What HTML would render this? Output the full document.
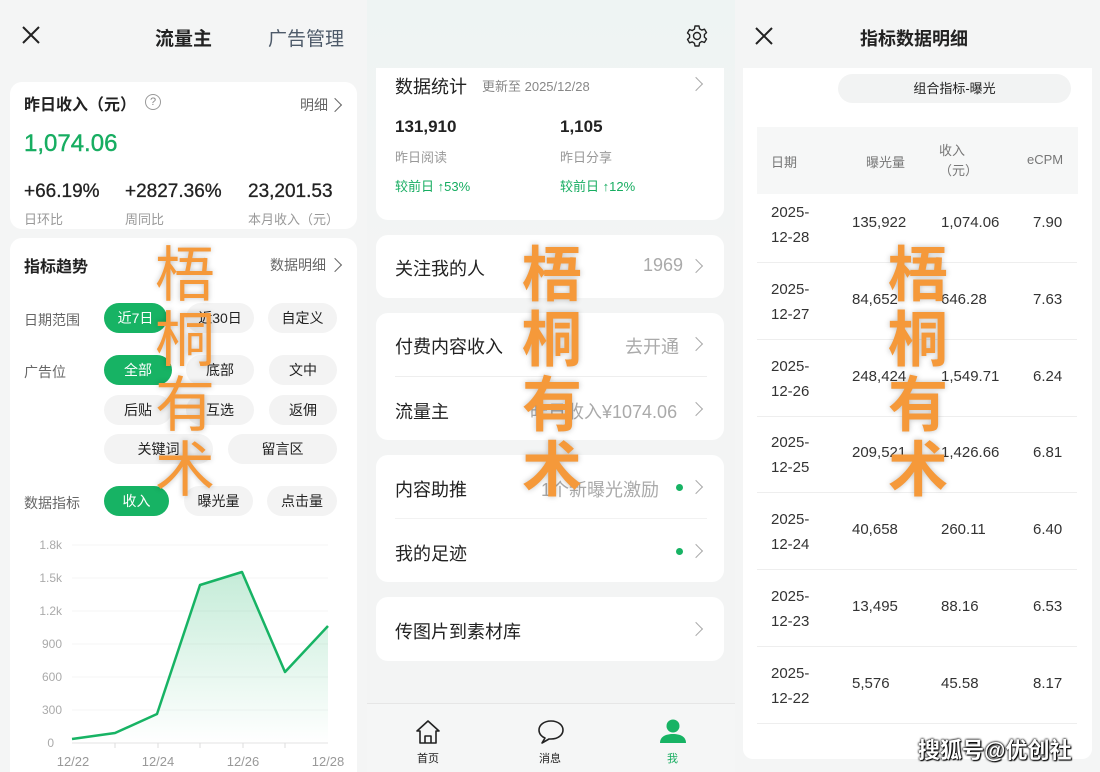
<!DOCTYPE html>
<html><head><meta charset="utf-8"><style>
*{margin:0;padding:0;box-sizing:border-box}
html,body{width:1100px;height:772px;overflow:hidden}
body{position:relative;font-family:"Liberation Sans","Noto Sans CJK SC",sans-serif;color:#222;background:#f4f5f5}
.a{position:absolute;white-space:nowrap}
.card{position:absolute;background:#fff;border-radius:12px}
.g{color:#999}
.pill{position:absolute;height:30px;border-radius:15px;background:#f3f3f3;font-size:14px;text-align:center;line-height:30px;color:#222}
.pill.on{background:#17b364;color:#fff}
.chev{position:absolute;width:10px;height:10px;border-top:1.4px solid #aaa;border-right:1.4px solid #aaa;transform:rotate(45deg)}
.wm{position:absolute;font-size:60px;line-height:65px;color:#f5993a;width:64px;text-align:center;text-shadow:0 0 6px rgba(0,0,0,.25);font-family:"Noto Sans CJK SC",sans-serif}
.td{position:absolute;font-size:15px;color:#333}
</style></head><body>
<!-- LEFT -->
<div class="a" style="left:0;top:0;width:367px;height:772px;background:#f4f5f5"></div>
<svg class="a" style="left:22px;top:26px" width="18" height="18"><path d="M1 1L17 17M17 1L1 17" stroke="#222" stroke-width="2"/></svg>
<div class="a" style="left:155px;top:24px;font-size:19px;font-weight:bold">流量主</div>
<div class="a" style="left:268px;top:24px;font-size:19px;color:#4d5a69">广告管理</div>
<div class="card" style="left:10px;top:82px;width:347px;height:147px"></div>
<div class="a" style="left:24px;top:91px;font-size:16px;font-weight:bold">昨日收入（元）</div>
<div class="a" style="left:145px;top:94px;width:16px;height:16px;border:1px solid #999;border-radius:50%;font-size:11px;color:#888;text-align:center;line-height:14px">?</div>
<div class="a g" style="left:300px;top:95px;font-size:14px;color:#666">明细</div>
<div class="chev" style="left:330px;top:100px;border-color:#666"></div>
<div class="a" style="left:24px;top:130px;font-size:24px;color:#17ad61;-webkit-text-stroke:0.4px #17ad61">1,074.06</div>
<div class="a" style="left:24px;top:181px;font-size:19px;-webkit-text-stroke:0.3px #222">+66.19%</div>
<div class="a" style="left:125px;top:181px;font-size:19px;-webkit-text-stroke:0.3px #222">+2827.36%</div>
<div class="a" style="left:248px;top:181px;font-size:19px;-webkit-text-stroke:0.3px #222">23,201.53</div>
<div class="a g" style="left:24px;top:209px;font-size:13px">日环比</div>
<div class="a g" style="left:125px;top:209px;font-size:13px">周同比</div>
<div class="a g" style="left:248px;top:209px;font-size:13px">本月收入（元）</div>
<div class="card" style="left:10px;top:238px;width:347px;height:534px;border-radius:12px 12px 0 0"></div>
<div class="a" style="left:24px;top:253px;font-size:16px;font-weight:bold">指标趋势</div>
<div class="a" style="left:270px;top:255px;font-size:14px;color:#666">数据明细</div>
<div class="chev" style="left:330px;top:260px;border-color:#666"></div>
<div class="a" style="left:24px;top:310px;font-size:14px;color:#666">日期范围</div>
<div class="pill on" style="left:104px;top:303px;width:63px">近7日</div>
<div class="pill" style="left:186px;top:303px;width:68px">近30日</div>
<div class="pill" style="left:268px;top:303px;width:69px">自定义</div>
<div class="a" style="left:24px;top:362px;font-size:14px;color:#666">广告位</div>
<div class="pill on" style="left:104px;top:355px;width:68px">全部</div>
<div class="pill" style="left:186px;top:355px;width:68px">底部</div>
<div class="pill" style="left:269px;top:355px;width:68px">文中</div>
<div class="pill" style="left:104px;top:395px;width:68px">后贴</div>
<div class="pill" style="left:186px;top:395px;width:68px">互选</div>
<div class="pill" style="left:269px;top:395px;width:68px">返佣</div>
<div class="pill" style="left:104px;top:434px;width:109px">关键词</div>
<div class="pill" style="left:228px;top:434px;width:109px">留言区</div>
<div class="a" style="left:24px;top:493px;font-size:14px;color:#666">数据指标</div>
<div class="pill on" style="left:104px;top:486px;width:65px">收入</div>
<div class="pill" style="left:184px;top:486px;width:69px">曝光量</div>
<div class="pill" style="left:267px;top:486px;width:70px">点击量</div>
<svg class="a" style="left:0;top:530px" width="367" height="242">
<defs><linearGradient id="gr" x1="0" y1="0" x2="0" y2="1"><stop offset="0" stop-color="#17b364" stop-opacity=".25"/><stop offset="1" stop-color="#17b364" stop-opacity="0"/></linearGradient></defs>
<g stroke="#f5f5f5"><path d="M72 15H328M72 48H328M72 81H328M72 114H328M72 147H328M72 180H328"/></g>
<path d="M72 213H328" stroke="#e3e3e3"/>
<g stroke="#ddd"><path d="M115 213v5M158 213v5M200 213v5M243 213v5M285 213v5"/></g>
<g font-size="12" fill="#aaa" text-anchor="end" font-family="Liberation Sans">
<text x="62" y="19">1.8k</text><text x="62" y="52">1.5k</text><text x="62" y="85">1.2k</text><text x="62" y="118">900</text><text x="62" y="151">600</text><text x="62" y="184">300</text><text x="54" y="217">0</text></g>
<g font-size="13" fill="#999" text-anchor="middle" font-family="Liberation Sans">
<text x="73" y="236">12/22</text><text x="158" y="236">12/24</text><text x="243" y="236">12/26</text><text x="328" y="236">12/28</text></g>
<path d="M72 209L115 203L157 184L200 55L242 42L285 142L328 96V213H72Z" fill="url(#gr)"/>
<path d="M72 209L115 203L157 184L200 55L242 42L285 142L328 96" fill="none" stroke="#17b364" stroke-width="2.5" stroke-linejoin="round"/>
</svg>
<div class="wm" style="left:153px;top:238px">梧<br>桐<br>有<br>术</div>

<!-- MIDDLE -->
<div class="a" style="left:367px;top:0;width:368px;height:772px;background:linear-gradient(#eef4f3,#f3f4f4 250px)"></div>
<svg class="a" style="left:685px;top:24px" width="24" height="24" viewBox="0 0 24 24"><path d="M10 2h4l.6 2.8 2.2 1.3 2.7-.9 2 3.4-2.1 1.9v2.6l2.1 1.9-2 3.4-2.7-.9-2.2 1.3L14 22h-4l-.6-2.8-2.2-1.3-2.7.9-2-3.4 2.1-1.9V10.9L2.5 9l2-3.4 2.7.9 2.2-1.3z" fill="none" stroke="#222" stroke-width="1.4" stroke-linejoin="round"/><circle cx="12" cy="12" r="3.5" fill="none" stroke="#222" stroke-width="1.4"/></svg>
<div class="card" style="left:376px;top:68px;width:348px;height:152px;border-radius:0 0 12px 12px"></div>
<div class="a" style="left:395px;top:73px;font-size:18px">数据统计</div>
<div class="a g" style="left:482px;top:76px;font-size:13px;color:#888">更新至 2025/12/28</div>
<div class="chev" style="left:691px;top:79px"></div>
<div class="a" style="left:395px;top:117px;font-size:17px;font-weight:bold">131,910</div>
<div class="a" style="left:560px;top:117px;font-size:17px;font-weight:bold">1,105</div>
<div class="a g" style="left:395px;top:147px;font-size:13px">昨日阅读</div>
<div class="a g" style="left:560px;top:147px;font-size:13px">昨日分享</div>
<div class="a" style="left:395px;top:176px;font-size:13px;color:#17ad61">较前日 ↑53%</div>
<div class="a" style="left:560px;top:176px;font-size:13px;color:#17ad61">较前日 ↑12%</div>
<div class="card" style="left:376px;top:235px;width:348px;height:63px"></div>
<div class="a" style="left:395px;top:255px;font-size:18px">关注我的人</div>
<div class="a g" style="left:643px;top:255px;font-size:18px;color:#aaa">1969</div>
<div class="chev" style="left:691px;top:261px"></div>
<div class="card" style="left:376px;top:313px;width:348px;height:127px"></div>
<div class="a" style="left:395px;top:333px;font-size:18px">付费内容收入</div>
<div class="a" style="left:625px;top:333px;font-size:18px;color:#aaa">去开通</div>
<div class="chev" style="left:691px;top:339px"></div>
<div class="a" style="left:395px;top:376px;width:312px;height:1px;background:#eee"></div>
<div class="a" style="left:395px;top:398px;font-size:18px">流量主</div>
<div class="a" style="left:530px;top:398px;font-size:18px;color:#aaa">昨日收入¥1074.06</div>
<div class="chev" style="left:691px;top:404px"></div>
<div class="card" style="left:376px;top:455px;width:348px;height:127px"></div>
<div class="a" style="left:395px;top:476px;font-size:18px">内容助推</div>
<div class="a" style="left:541px;top:476px;font-size:18px;color:#aaa">1个新曝光激励</div>
<div class="a" style="left:676px;top:484px;width:7px;height:7px;border-radius:50%;background:#17b364"></div>
<div class="chev" style="left:691px;top:482px"></div>
<div class="a" style="left:395px;top:518px;width:312px;height:1px;background:#f2f2f2"></div>
<div class="a" style="left:395px;top:540px;font-size:18px">我的足迹</div>
<div class="a" style="left:676px;top:548px;width:7px;height:7px;border-radius:50%;background:#17b364"></div>
<div class="chev" style="left:691px;top:546px"></div>
<div class="card" style="left:376px;top:597px;width:348px;height:64px"></div>
<div class="a" style="left:395px;top:618px;font-size:18px">传图片到素材库</div>
<div class="chev" style="left:691px;top:624px"></div>
<div class="a" style="left:367px;top:703px;width:368px;height:69px;background:#f5f6f6;border-top:1px solid #e6e6e6"></div>
<svg class="a" style="left:415px;top:719px" width="26" height="26" viewBox="0 0 26 26"><path d="M2 12L13 2L24 12H21V24H5V12Z M10 24V17H16V24" fill="none" stroke="#222" stroke-width="1.6" stroke-linejoin="round"/></svg>
<svg class="a" style="left:537px;top:719px" width="28" height="26" viewBox="0 0 28 26"><path d="M14 2C7 2 2 6 2 11C2 15 5 18 8 19L5 24L12 20C13 20 13.5 20 14 20C21 20 26 16 26 11C26 6 21 2 14 2Z" fill="none" stroke="#222" stroke-width="1.6" stroke-linejoin="round"/></svg>
<svg class="a" style="left:659px;top:718px" width="28" height="26" viewBox="0 0 28 26"><circle cx="14" cy="8" r="6.5" fill="#17b364"/><path d="M1 25C1 19 6 16 14 16C22 16 27 19 27 25Z" fill="#17b364"/></svg>
<div class="a" style="left:417px;top:750px;font-size:11px">首页</div>
<div class="a" style="left:539px;top:750px;font-size:11px">消息</div>
<div class="a" style="left:667px;top:750px;font-size:11px;color:#17ad61">我</div>
<div class="wm" style="left:520px;top:238px;font-weight:bold">梧<br>桐<br>有<br>术</div>

<!-- RIGHT -->
<div class="a" style="left:735px;top:0;width:365px;height:772px;background:#f4f5f5"></div>
<svg class="a" style="left:755px;top:27px" width="18" height="18"><path d="M1 1L17 17M17 1L1 17" stroke="#222" stroke-width="2"/></svg>
<div class="a" style="left:860px;top:25px;font-size:18px;font-weight:bold">指标数据明细</div>
<div class="card" style="left:743px;top:68px;width:349px;height:691px;border-radius:0 0 10px 10px"></div>
<div class="a" style="left:838px;top:74px;width:233px;height:29px;border-radius:15px;background:#f2f3f3;font-size:13px;text-align:center;line-height:29px">组合指标-曝光</div>
<div class="a" style="left:757px;top:127px;width:321px;height:67px;background:#f6f7f7"></div>
<div class="td" style="left:771px;top:152px;font-size:13px;color:#777">日期</div>
<div class="td" style="left:866px;top:152px;font-size:13px;color:#777">曝光量</div>
<div class="td" style="left:939px;top:141px;font-size:13px;color:#777;line-height:20px;white-space:nowrap">收入<br>（元）</div>
<div class="td" style="left:1027px;top:152px;font-size:13px;color:#777">eCPM</div>
<div id="rows"></div>
<div class="wm" style="left:886px;top:238px;font-weight:bold">梧<br>桐<br>有<br>术</div>
<div class="a" style="left:918px;top:733px;font-size:22px;color:#fff;font-weight:bold;text-shadow:0 0 2px #000,0 0 2px #000,1px 1px 1px #000">搜狐号@优创社</div>
<script>
var d=[["12-28","135,922","1,074.06","7.90"],["12-27","84,652","646.28","7.63"],["12-26","248,424","1,549.71","6.24"],["12-25","209,521","1,426.66","6.81"],["12-24","40,658","260.11","6.40"],["12-23","13,495","88.16","6.53"],["12-22","5,576","45.58","8.17"]];
var h="";
d.forEach(function(r,i){var t=194+i*76.8;
h+='<div class="td" style="left:771px;top:'+(t+6)+'px;line-height:25px">2025-<br>'+r[0]+'</div>';
h+='<div class="td" style="left:852px;top:'+(t+20)+'px">'+r[1]+'</div>';
h+='<div class="td" style="left:941px;top:'+(t+20)+'px">'+r[2]+'</div>';
h+='<div class="td" style="left:1033px;top:'+(t+20)+'px">'+r[3]+'</div>';
h+='<div class="a" style="left:757px;top:'+Math.round(t+68)+'px;width:320px;height:1px;background:#eee"></div>';});
document.getElementById("rows").outerHTML=h;
</script>
</body></html>
